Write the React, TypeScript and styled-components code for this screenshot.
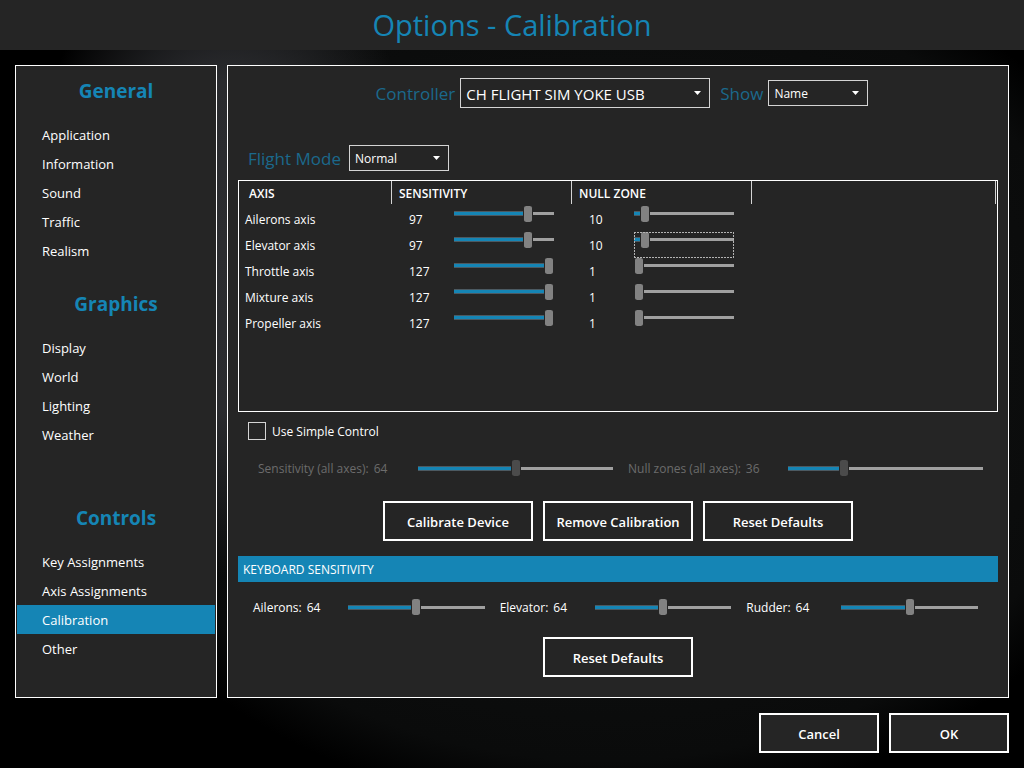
import React, { useId, useState } from "react";
import styled, { createGlobalStyle, css } from "styled-components";

const color = {
  panel: "#252525",
  accent: "#1585b5",
  label: "#1b698c",
  line: "#ffffff",
  field: "#d4d4d4",
  text: "#ffffff",
  muted: "#6c6c6c",
  track: "#a0a0a0",
  thumb: "#828282",
  thumbOff: "#4b4b4b",
};

const GlobalStyle = createGlobalStyle`
  *, *::before, *::after { box-sizing: border-box; }
  body {
    margin: 0;
    background: #000;
    color: ${color.text};
    font-family: "Open Sans", "Noto Sans", sans-serif;
    font-size: 12px;
    line-height: 16px;
  }
  button, select, input { font: inherit; color: inherit; }
`;

const Page = styled.div`
  min-height: 100vh;
  display: flex;
  flex-direction: column;
  background:
    radial-gradient(ellipse 200px 330px at 22% 32%, #2c2d30 0%, #2a2b2e 50%, transparent 100%),
    radial-gradient(ellipse 56% 58% at 59% 48%, #131414 0%, #0a0b0b 88%, transparent 100%),
    #000;
`;

const TitleBar = styled.header`
  height: 50px;
  display: flex;
  align-items: center;
  justify-content: center;
  background: ${color.panel};
`;

const Title = styled.h1`
  margin: 0;
  font-size: 29px;
  line-height: 40px;
  font-weight: 400;
  color: ${color.accent};
`;

const Main = styled.main`
  flex: 1;
  display: flex;
  gap: 10px;
  padding: 15px;
`;

const Nav = styled.nav`
  flex: 0 0 202px;
  display: grid;
  grid-template-rows: 213px 1fr auto;
  padding: 0 1px;
  border: 1px solid ${color.line};
  background: ${color.panel};
`;

const NavSection = styled.section`
  &:last-child { padding-bottom: 34px; }
`;

const NavHeading = styled.h2`
  margin: 0;
  height: 54px;
  font-size: 19px;
  line-height: 50px;
  font-weight: 700;
  text-align: center;
  color: ${color.accent};
`;

const NavList = styled.ul`
  margin: 0;
  padding: 0;
  list-style: none;
`;

const NavLink = styled.a<{ $active: boolean }>`
  display: block;
  padding: 2px 0 0 25px;
  font-size: 13px;
  line-height: 27px;
  color: ${color.text};
  text-decoration: none;
  background: ${(p) => (p.$active ? color.accent : "transparent")};
`;

const Panel = styled.section`
  flex: 1;
  min-width: 0;
  padding: 12px 10px 20px;
  border: 1px solid ${color.line};
  background: ${color.panel};
`;

const FieldRow = styled.div<{ $centered?: boolean }>`
  display: flex;
  align-items: center;
  gap: 10px;
  ${(p) => (p.$centered ? css`justify-content: center; padding-left: 8px;` : css`margin: 37px 0 9px; padding-left: 10px;`)}
`;

const Field = styled.div`
  display: flex;
  align-items: center;
  gap: 5px;
`;

const FieldLabel = styled.label<{ $width?: number }>`
  min-width: ${(p) => p.$width ?? 0}px;
  padding-top: 2px;
  font-size: 17px;
  line-height: 24px;
  color: ${color.label};
`;

const SelectBox = styled.span<{ $large?: boolean }>`
  position: relative;
  display: block;
  width: ${(p) => (p.$large ? 250 : 100)}px;
  height: ${(p) => (p.$large ? 30 : 26)}px;
  font-size: ${(p) => (p.$large ? 15 : 12)}px;

  select {
    appearance: none;
    width: 100%;
    height: 100%;
    padding: 1px 24px 0 5px;
    border: 1px solid ${color.field};
    border-radius: 0;
    background: transparent;
    outline: none;
  }

  option { background: ${color.panel}; }

  svg {
    position: absolute;
    top: 50%;
    right: 9px;
    width: 7px;
    height: 4px;
    margin-top: -2px;
    fill: ${color.text};
    pointer-events: none;
  }
`;

const AxisBox = styled.div`
  min-height: 232px;
  padding-right: 1px;
  border: 1px solid ${color.line};
`;

const AxisTable = styled.table`
  width: 100%;
  table-layout: fixed;
  border-collapse: collapse;
`;

const HeadCell = styled.th<{ $width?: number }>`
  width: ${(p) => (p.$width ? `${p.$width}px` : "auto")};
  height: 25px;
  padding: 0 0 2px;
  text-align: left;
  font-weight: 600;
`;

const HeadText = styled.div<{ $first?: boolean }>`
  height: 23px;
  padding-left: ${(p) => (p.$first ? 10 : 7)}px;
  line-height: 25px;
  border-right: 1px solid ${color.field};
`;

const Cell = styled.td`
  height: 26px;
  padding: 2px 0 0 6px;
`;

const ValueCell = styled.td`
  height: 26px;
  padding: 0 18px 0 17px;
`;

const ValueLine = styled.div`
  display: flex;
  align-items: center;
  height: 26px;

  output {
    flex: 0 0 45px;
    padding-top: 2px;
  }
`;

const SliderBox = styled.span<{ $focused?: boolean }>`
  position: relative;
  display: block;
  flex: 1;
  min-width: 0;
  height: 26px;

  ${(p) =>
    p.$focused &&
    css`
      &::after {
        content: "";
        position: absolute;
        inset: 0;
        pointer-events: none;
        --dash: #b4b4b4 0 2px, transparent 2px 3px;
        background:
          repeating-linear-gradient(90deg, var(--dash)) top / 100% 1px no-repeat,
          repeating-linear-gradient(90deg, var(--dash)) bottom / 100% 1px no-repeat,
          repeating-linear-gradient(180deg, var(--dash)) left / 1px 100% no-repeat,
          repeating-linear-gradient(180deg, var(--dash)) right / 1px 100% no-repeat;
      }
    `}
`;

const Range = styled.input<{ $trackTop: number }>`
  appearance: none;
  display: block;
  flex: 1;
  width: 100%;
  min-width: 0;
  height: 16px;
  margin: 0;
  background: transparent;
  outline: none;

  &::-webkit-slider-runnable-track {
    height: 16px;
    background:
      linear-gradient(#4c5a62 0 1px, ${color.accent} 1px 4px, #4c5a62 4px) 0 ${(p) => p.$trackTop - 1}px / var(--fill) 5px no-repeat,
      linear-gradient(${color.track}, ${color.track}) 0 ${(p) => p.$trackTop}px / 100% 3px no-repeat;
  }

  &::-webkit-slider-thumb {
    appearance: none;
    width: 10px;
    height: 16px;
    border: solid ${color.panel};
    border-width: 0 1px;
    border-radius: 3px / 2px;
    background: ${color.thumb};
  }

  &:disabled::-webkit-slider-thumb { background: ${color.thumbOff}; }
`;

const CheckRow = styled.label`
  display: flex;
  align-items: center;
  gap: 6px;
  width: fit-content;
  height: 18px;
  margin: 10px 0 0 10px;
  line-height: 20px;
`;

const Checkbox = styled.input`
  appearance: none;
  width: 18px;
  height: 18px;
  margin: 0;
  border: 1px solid ${color.field};

  &:checked { background: ${color.accent}; }
`;

const CheckText = styled.span`
  padding-top: 2px;
`;

const AllAxes = styled.div`
  display: grid;
  grid-template-columns: 1fr 1fr;
  margin-top: 20px;
  padding-left: 20px;
`;

const AllAxesItem = styled.div`
  display: flex;
  align-items: center;
  padding-right: 15px;
  color: ${color.muted};
`;

const Caption = styled.div<{ $width: number }>`
  flex: 0 0 ${(p) => p.$width}px;
  display: flex;
  gap: 5px;
  height: 16px;
  line-height: 18px;
`;

const ButtonRow = styled.div<{ $top: number }>`
  display: flex;
  justify-content: center;
  gap: 10px;
  margin-top: ${(p) => p.$top}px;
`;

const Button = styled.button<{ $width: number }>`
  width: ${(p) => p.$width}px;
  height: 40px;
  padding: 2px 0 0;
  border: 2px solid ${color.line};
  background: ${color.panel};
  font-size: 13px;
  font-weight: 600;
  white-space: nowrap;
`;

const Banner = styled.h2`
  margin: 15px 0 0;
  padding: 2px 5px 0;
  background: ${color.accent};
  font-size: 12px;
  line-height: 24px;
  font-weight: 400;
`;

const KeyboardRow = styled.div`
  display: grid;
  grid-template-columns: repeat(3, 1fr);
  margin-top: 17px;
  padding: 0 10px;
`;

const KeyboardItem = styled.div`
  display: flex;
  align-items: center;
  padding: 0 10px 0 5px;
`;

const Footer = styled.footer`
  display: flex;
  justify-content: flex-end;
  gap: 10px;
  padding: 0 15px 15px;
`;

const MIN = 1;
const MAX = 127;

type SliderProps = {
  id?: string;
  label?: string;
  value: number;
  trackTop: number;
  disabled?: boolean;
  onChange: (value: number) => void;
};

function Slider({ id, label, value, trackTop, disabled, onChange }: SliderProps) {
  const part = (value - MIN) / (MAX - MIN);
  // The fill ends under the thumb, whose centre travels between 5px and 100% - 5px.
  const fill = value === MIN ? "0px" : `calc(5px + (100% - 10px) * ${part})`;
  return (
    <Range
      id={id}
      type="range"
      min={MIN}
      max={MAX}
      value={value}
      disabled={disabled}
      aria-label={label}
      $trackTop={trackTop}
      onChange={(e) => onChange(Number(e.target.value))}
      style={{ "--fill": fill } as React.CSSProperties}
    />
  );
}

type SelectProps = { label: string; options: string[]; large?: boolean; labelWidth?: number };

function Select({ label, options, large, labelWidth }: SelectProps) {
  const id = useId();
  return (
    <Field>
      <FieldLabel htmlFor={id} $width={labelWidth}>{label}</FieldLabel>
      <SelectBox $large={large}>
        <select id={id} defaultValue={options[0]}>
          {options.map((option) => (
            <option key={option}>{option}</option>
          ))}
        </select>
        <svg viewBox="0 0 7 4" aria-hidden="true">
          <path d="M0 0H7L3.5 4Z" />
        </svg>
      </SelectBox>
    </Field>
  );
}

type CaptionedSliderProps = { label: string; initial: number; width: number; disabled?: boolean };

function CaptionedSlider({ label, initial, width, disabled }: CaptionedSliderProps) {
  const id = useId();
  const [value, setValue] = useState(initial);
  return (
    <>
      <Caption $width={width}>
        <label htmlFor={id}>{label}:</label>
        <output htmlFor={id}>{value}</output>
      </Caption>
      <Slider id={id} value={value} trackTop={7} disabled={disabled} onChange={setValue} />
    </>
  );
}

function AxisValue({ label, initial, focused }: { label: string; initial: number; focused?: boolean }) {
  const [value, setValue] = useState(initial);
  return (
    <ValueLine>
      <output>{value}</output>
      <SliderBox $focused={focused}>
        <Slider label={label} value={value} trackTop={6} onChange={setValue} />
      </SliderBox>
    </ValueLine>
  );
}

const sections = [
  { title: "General", items: ["Application", "Information", "Sound", "Traffic", "Realism"] },
  { title: "Graphics", items: ["Display", "World", "Lighting", "Weather"] },
  { title: "Controls", items: ["Key Assignments", "Axis Assignments", "Calibration", "Other"] },
];

const axes = [
  { name: "Ailerons axis", sensitivity: 97, nullZone: 10 },
  { name: "Elevator axis", sensitivity: 97, nullZone: 10, focused: true },
  { name: "Throttle axis", sensitivity: 127, nullZone: 1 },
  { name: "Mixture axis", sensitivity: 127, nullZone: 1 },
  { name: "Propeller axis", sensitivity: 127, nullZone: 1 },
];

export default function App() {
  return (
    <Page>
      <GlobalStyle />
      <TitleBar>
        <Title>Options - Calibration</Title>
      </TitleBar>
      <Main>
        <Nav>
          {sections.map((section) => (
            <NavSection key={section.title}>
              <NavHeading>{section.title}</NavHeading>
              <NavList>
                {section.items.map((item) => (
                  <li key={item}>
                    <NavLink href="#" $active={item === "Calibration"}>
                      {item}
                    </NavLink>
                  </li>
                ))}
              </NavList>
            </NavSection>
          ))}
        </Nav>
        <Panel>
          <FieldRow $centered>
            <Select label="Controller" options={["CH FLIGHT SIM YOKE USB"]} large />
            <Select label="Show" options={["Name"]} />
          </FieldRow>
          <FieldRow>
            <Select label="Flight Mode" options={["Normal"]} labelWidth={96} />
          </FieldRow>
          <AxisBox>
            <AxisTable>
              <thead>
                <tr>
                  <HeadCell $width={153}><HeadText $first>AXIS</HeadText></HeadCell>
                  <HeadCell $width={180}><HeadText>SENSITIVITY</HeadText></HeadCell>
                  <HeadCell $width={180}><HeadText>NULL ZONE</HeadText></HeadCell>
                  <HeadCell><HeadText /></HeadCell>
                </tr>
              </thead>
              <tbody>
                {axes.map((axis) => (
                  <tr key={axis.name}>
                    <Cell>{axis.name}</Cell>
                    <ValueCell>
                      <AxisValue label={`${axis.name} sensitivity`} initial={axis.sensitivity} />
                    </ValueCell>
                    <ValueCell>
                      <AxisValue label={`${axis.name} null zone`} initial={axis.nullZone} focused={axis.focused} />
                    </ValueCell>
                    <Cell />
                  </tr>
                ))}
              </tbody>
            </AxisTable>
          </AxisBox>
          <CheckRow>
            <Checkbox type="checkbox" />
            <CheckText>Use Simple Control</CheckText>
          </CheckRow>
          <AllAxes>
            <AllAxesItem>
              <CaptionedSlider label="Sensitivity (all axes)" initial={64} width={160} disabled />
            </AllAxesItem>
            <AllAxesItem>
              <CaptionedSlider label="Null zones (all axes)" initial={36} width={160} disabled />
            </AllAxesItem>
          </AllAxes>
          <ButtonRow $top={25}>
            <Button type="button" $width={150}>Calibrate Device</Button>
            <Button type="button" $width={150}>Remove Calibration</Button>
            <Button type="button" $width={150}>Reset Defaults</Button>
          </ButtonRow>
          <Banner>KEYBOARD SENSITIVITY</Banner>
          <KeyboardRow>
            {["Ailerons", "Elevator", "Rudder"].map((name) => (
              <KeyboardItem key={name}>
                <CaptionedSlider label={name} initial={64} width={95} />
              </KeyboardItem>
            ))}
          </KeyboardRow>
          <ButtonRow $top={22}>
            <Button type="button" $width={150}>Reset Defaults</Button>
          </ButtonRow>
        </Panel>
      </Main>
      <Footer>
        <Button type="button" $width={120}>Cancel</Button>
        <Button type="button" $width={120}>OK</Button>
      </Footer>
    </Page>
  );
}
